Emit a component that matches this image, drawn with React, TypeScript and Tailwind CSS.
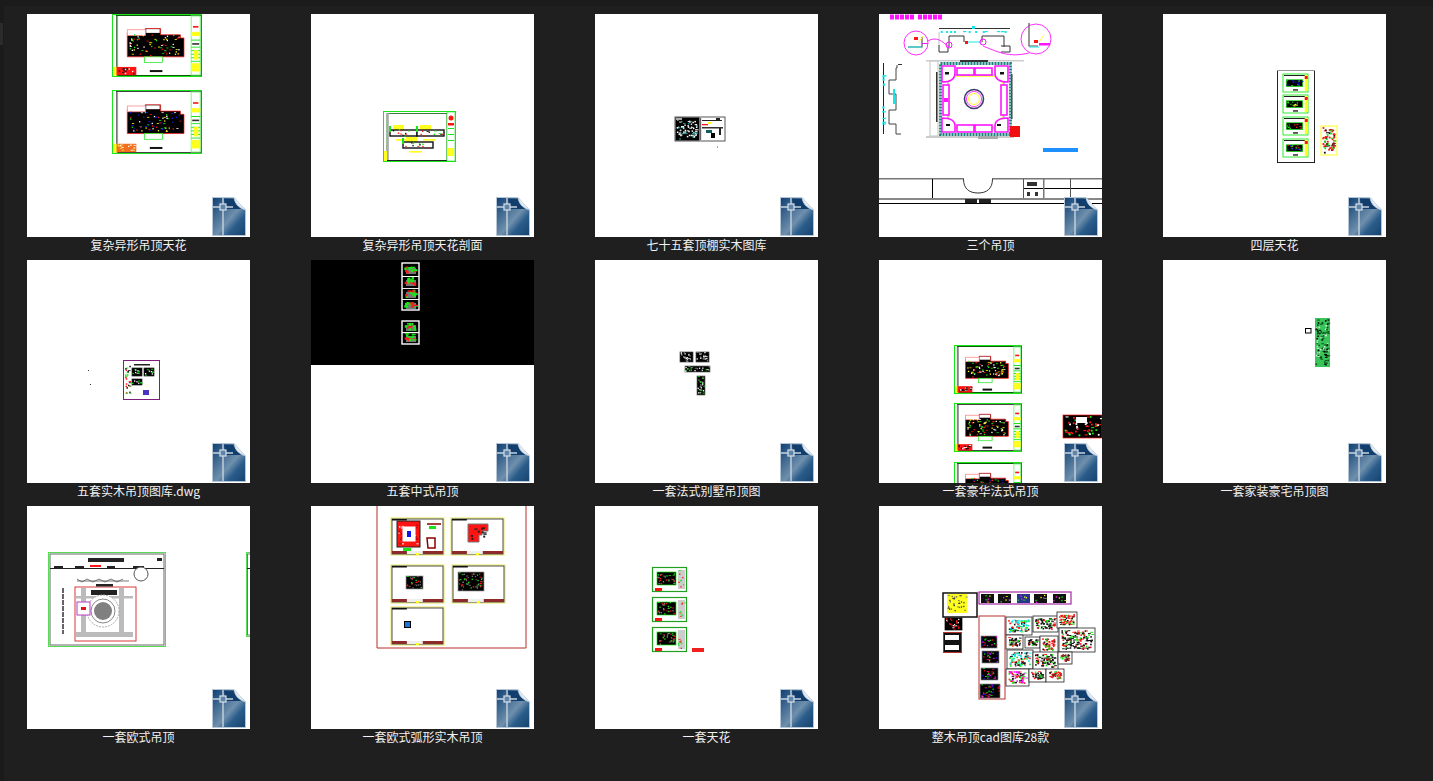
import type { ReactNode } from 'react';

const GREEN = '#19e619';
const RED = '#ff1414';
const YEL = '#ffff1e';
const MAG = '#ff14ff';
const CYAN = '#14e6e6';
const BLUE = '#1414e6';

// small deterministic scatter, reads like a shrunken CAD drawing
const Speckle = ({ x, y, w, h, n, colors, seed = 7, s = 2 }: { x: number; y: number; w: number; h: number; n: number; colors: string[]; seed?: number; s?: number }) => {
  let v = seed * 9301 + 49297;
  const next = () => {
    v = (v * 9301 + 49297) % 233280;
    return v / 233280;
  };
  const items = [];
  for (let i = 0; i < n; i++) {
    const px = x + next() * (w - s);
    const py = y + next() * (h - s);
    const wide = next() > 0.65;
    items.push(<rect key={i} x={px.toFixed(1)} y={py.toFixed(1)} width={wide ? s * 1.7 : s} height={wide ? s * 0.6 : s} fill={colors[i % colors.length]} />);
  }
  return <g>{items}</g>;
};

const Blob = ({ x, y, w, h, colors, seed, n = 24, edge = GREEN, fill = '#000' }: { x: number; y: number; w: number; h: number; colors: string[]; seed: number; n?: number; edge?: string; fill?: string }) => (
  <g>
    <rect x={x} y={y} width={w} height={h} fill={fill} stroke={edge} strokeWidth="0.7" />
    <Speckle x={x} y={y} w={w} h={h} n={Math.max(n, Math.round((w * h) / 9))} colors={colors} seed={seed} s={1.3} />
  </g>
);

const TitleCol = ({ x, y, w, h }: { x: number; y: number; w: number; h: number }) => (
  <g>
    <rect x={x} y={y} width={w} height={h} fill="#fff" stroke="#7dfb7d" strokeWidth="1" />
    <rect x={x + w * 0.2} y={y + h * 0.17} width={w * 0.6} height="1.6" fill={RED} />
    <rect x={x} y={y + h * 0.27} width={w} height={h * 0.07} fill={YEL} />
    <rect x={x} y={y + h * 0.4} width={w} height="1" fill={GREEN} />
    <rect x={x + 1} y={y + h * 0.46} width={w - 2} height="1.6" fill="#333" />
    {[0.52, 0.58, 0.64, 0.7, 0.76].map((f) => (
      <rect key={f} x={x} y={y + h * f} width={w} height="0.9" fill={GREEN} />
    ))}
    <rect x={x + w * 0.3} y={y + h * 0.58} width={w * 0.5} height={h * 0.16} fill={YEL} />
    <rect x={x} y={y + h * 0.8} width={w} height={h * 0.14} fill={YEL} />
  </g>
);

const Villa = ({ x, y, w, h, frameGray = false, stamp = RED, plan = [RED, YEL, GREEN, '#fff'], seed = 3 }: { x: number; y: number; w: number; h: number; frameGray?: boolean; stamp?: string; plan?: string[]; seed?: number }) => (
  <g>
    <rect x={x + 0.5} y={y + 0.5} width={w - 1} height={h - 1} fill="#fff" stroke={GREEN} strokeWidth="1" />
    <rect x={x + w * 0.05} y={y + 1.5} width={w * 0.94} height={h - 3} fill="#fff" stroke={frameGray ? '#444' : '#0a5c0a'} strokeWidth="1" />
    <rect x={x + w * 0.05} y={y + 2} width="1.6" height={h - 4} fill="#a0a0a0" />
    <TitleCol x={x + w * 0.88} y={y + 2} w={w * 0.1} h={h - 4} />
    <path d={`M${x + w * 0.17} ${y + h * 0.3}h${w * 0.2}v-${h * 0.07}h${w * 0.17}v${h * 0.1}h${w * 0.22}v${h * 0.05}h${w * 0.04}v${h * 0.3}h-${w * 0.63}z`} fill="#000" stroke={RED} strokeWidth="0.7" />
    <rect x={x + w * 0.17} y={y + h * 0.25} width={w * 0.2} height={h * 0.09} fill="#fff" stroke="#ff8a8a" strokeWidth="0.8" />
    <rect x={x + w * 0.36} y={y + h * 0.68} width={w * 0.2} height={h * 0.09} fill="#fff" stroke={GREEN} strokeWidth="0.7" />
    <rect x={x + w * 0.38} y={y + h * 0.24} width={w * 0.15} height={h * 0.06} fill="#fff" />
    <Speckle x={x + w * 0.18} y={y + h * 0.32} w={w * 0.6} h={h * 0.35} n={70} colors={plan} seed={seed} s={1.3} />
    <rect x={x + w * 0.42} y={y + h * 0.89} width={w * 0.14} height="2" fill="#111" />
    <rect x={x + 1} y={y + h * 0.84} width={w * 0.05} height={h * 0.14} fill={YEL} />
    <rect x={x + w * 0.05} y={y + h * 0.84} width={w * 0.22} height={h * 0.13} fill={stamp} />
    <Speckle x={x + w * 0.06} y={y + h * 0.85} w={w * 0.2} h={h * 0.11} n={14} colors={stamp === RED ? ['#111', '#111', '#fff'] : ['#fff', '#ffd24a']} seed={seed + 4} s={1.4} />
  </g>
);

const MiniSheet = ({ x, y, w, h, plan, seed }: { x: number; y: number; w: number; h: number; plan: string[]; seed: number }) => (
  <g>
    <rect x={x} y={y} width={w} height={h} fill="#fff" stroke={GREEN} strokeWidth="0.9" />
    <rect x={x + 1} y={y + 1} width={w - 2} height="1" fill="#222" />
    <rect x={x + w * 0.87} y={y + 1} width={w * 0.12} height={h - 2} fill={YEL} />
    <rect x={x + w * 0.87} y={y + 2} width={w * 0.12} height="3" fill={RED} />
    <Blob x={x + w * 0.13} y={y + h * 0.32} w={w * 0.66} h={h * 0.38} colors={plan} seed={seed} n={16} />
    <rect x={x + w * 0.4} y={y + h * 0.85} width={w * 0.2} height="1.3" fill="#111" />
  </g>
);

const RedSheet = ({ x, y, w, h, blobX, blobY, blobW, blobH, seed, dark = true }: { x: number; y: number; w: number; h: number; blobX: number; blobY: number; blobW: number; blobH: number; seed: number; dark?: boolean }) => (
  <g>
    <rect x={x} y={y} width={w} height={h} fill="#fff" stroke="#e8e85a" strokeWidth="1" />
    <rect x={x + 1} y={y + 1} width={w - 2} height={h - 2} fill="none" stroke="#222" strokeWidth="0.8" />
    <rect x={x + 1} y={y + 1} width={w * 0.28} height="1.5" fill="#111" />
    <rect x={x + 1} y={y + h - 4} width={w - 2} height="3" fill="#8c2a2a" />
    <rect x={x + w * 0.3} y={y + h - 4} width={w * 0.3} height="3" fill="#eee" />
    <rect x={x + w * 0.47} y={y + h - 2} width="3" height="2" fill={YEL} />
    {dark && <Blob x={blobX} y={blobY} w={blobW} h={blobH} colors={[RED, GREEN, '#777', '#666']} seed={seed} n={20} edge="#999" />}
  </g>
);

const Drawing1 = () => (
  <>
    <Villa x={85} y={0} w={90} h={63} seed={3} />
    <Villa x={85} y={76} w={90} h={64} frameGray stamp="#f0701e" plan={[BLUE, RED, YEL, GREEN, BLUE, '#fff']} seed={11} />
  </>
);

const Drawing2 = () => (
  <g>
    <rect x="72.5" y="97.5" width="72" height="50" fill="#fff" stroke={GREEN} strokeWidth="1" />
    <rect x="76" y="99.500" width="60" height="47" fill="#fff" stroke="#0a5c0a" strokeWidth="0.8" />
    <rect x="76" y="99" width="1.8" height="47" fill="#aaa" />
    <rect x="76" y="146" width="60" height="1" fill="#222" />
    <rect x="73" y="137" width="3" height="10" fill={YEL} />
    <rect x="136" y="98" width="8" height="49" fill="#fff" stroke={GREEN} strokeWidth="0.6" />
    <circle cx="140" cy="104" r="2.5" fill={RED} />
    <rect x="137" y="109" width="6" height="2.5" fill={RED} />
    <rect x="137" y="114" width="6" height="1" fill={GREEN} />
    <rect x="137" y="120" width="6" height="1" fill={GREEN} />
    <rect x="137" y="126" width="6" height="1" fill={GREEN} />
    <rect x="137" y="134" width="6" height="8" fill={YEL} />
    {[[80, 119], [107, 119], [93, 131]].map(([x, y], i) => (
      <g key={i}>
        <rect x={x + 2} y={y - 8} width="11" height="5" fill={YEL} />
        <rect x={x - 1} y={y - 3} width={i === 2 ? 30 : 27} height="6" fill="#fff" stroke="#111" strokeWidth="1.400" />
        <rect x={x - 2} y={y - 7} width="2" height="6" fill={GREEN} />
        <Speckle x={x} y={y - 4} w={26} h={8} n={10} colors={[RED, GREEN, '#111']} seed={i + 2} s={1.4} />
        <rect x={x + 5} y={y + 6} width="13" height="1.6" fill={YEL} />
      </g>
    ))}
  </g>
);

const Drawing3 = () => (
  <g>
    <rect x="80" y="103" width="50" height="24" fill="#fff" stroke="#555" strokeWidth="1" />
    <rect x="80.5" y="103.5" width="24" height="23" fill="#000" />
    <Speckle x={81} y={105} w={23} h={21} n={70} colors={['#fff', '#fff', '#1c9c9c', '#ddd']} seed={5} s={1.5} />
    <rect x="81" y="104" width="6" height="2" fill="#aaa" />
    <rect x="105" y="104" width="1.2" height="22" fill="#666" />
    <rect x="107" y="106" width="20" height="1" fill="#222" />
    <rect x="107" y="110" width="6" height="1.3" fill={RED} />
    <rect x="113" y="108" width="3" height="2" fill={YEL} />
    <rect x="107" y="113" width="21" height="1.5" fill="#333" />
    <rect x="121" y="104" width="4" height="2" fill="#222" />
    <rect x="111" y="116" width="6" height="3" fill="#125e5e" />
    <rect x="116" y="119" width="4" height="5" fill="#000" />
    <rect x="124" y="114" width="2" height="7" fill="#222" />
    <rect x="122" y="132.5" width="1" height="1" fill="#444" />
  </g>
);

const Drawing4 = () => (
  <g>
    {[11, 16, 21, 26, 31, 39, 44, 49, 54, 59].map((x) => (
      <rect key={x} x={x} y="0.500" width="4" height="5" fill={MAG} />
    ))}
    <rect x="60" y="14" width="71" height="1" fill="#333" />
    <Speckle x={60} y={17} w={71} h={2} n={12} colors={[CYAN]} seed={3} s={2} />
    <rect x="93" y="12" width="3" height="3" fill={CYAN} />
    <path d="M60 31v7h9v-5M70 33V22h15v6M103 28v-6h22v11M122 38h9v-6h-9" fill="none" stroke="#333" strokeWidth="1" />
    <path d="M60 18v16" stroke="#888" strokeWidth="0.5" />
    <rect x="86" y="27" width="3" height="3" fill={RED} />
    <path d="M89 28h14" stroke={CYAN} strokeWidth="1" />
    <circle cx="37" cy="29" r="12" fill="#fff" stroke={MAG} strokeWidth="0.9" />
    <circle cx="157" cy="25" r="15" fill="#fff" stroke={MAG} strokeWidth="0.9" />
    <path d="M49 27c8-5 14 0 21 6M104 32c15 6 26 12 46 7" fill="none" stroke={MAG} strokeWidth="0.9" />
    <circle cx="70" cy="31" r="3" fill="none" stroke={MAG} strokeWidth="1" />
    <circle cx="104" cy="28" r="3" fill="none" stroke={MAG} strokeWidth="1" />
    <path d="M29 33h14v-10M150 9v23h9" fill="none" stroke="#555" strokeWidth="1.200" />
    <path d="M29 33h14M150 33h10" stroke={CYAN} strokeWidth="1" />
    <rect x="35" y="23" width="4" height="3" fill={RED} />
    <rect x="155" y="26" width="4" height="3" fill={RED} />
    <path d="M40 28l4-6M160 28l5-7" stroke={YEL} strokeWidth="1" />
    <rect x="160" y="29" width="11" height="2.5" fill={MAG} />
    <rect x="43" y="29" width="6" height="1" fill={MAG} />
    <rect x="4" y="49" width="1" height="71" fill="#222" />
    <path d="M18 51v3h-1v12h-7v14h7v16h-7v14h7v10h5" fill="none" stroke="#444" strokeWidth="1" />
    <rect x="19" y="50" width="4" height="1" fill="#333" />
    <Speckle x={3} y={52} w={3} h={66} n={9} colors={[CYAN]} seed={9} s={2.2} />
    <rect x="14" y="75" width="2" height="15" fill={CYAN} />
    <rect x="47" y="46" width="98" height="1.500" fill="#ccc" />
    <rect x="51" y="47" width="8" height="75" fill="none" stroke="#ccc" strokeWidth="1.200" />
    <rect x="57" y="58" width="1.5" height="50" fill="#333" />
    <rect x="47" y="122" width="88" height="2" fill="#ccc" />
    <rect x="81" y="46" width="28" height="2" fill="#333" />
    <rect x="99" y="122" width="20" height="3" fill="#aaa" />
    <rect x="132" y="60" width="1.500" height="45" fill="#333" />
    <rect x="61.5" y="49.5" width="70" height="71" fill="#fff" stroke="#1a7f7f" strokeWidth="2.8" strokeDasharray="2 1" />
    <rect x="70" y="62" width="54" height="51" rx="4" fill="none" stroke={YEL} strokeWidth="1.400" />
    <rect x="69" y="61" width="56" height="53" rx="4" fill="none" stroke="#1e90ff" strokeWidth="0.700" />
    {[[78, 54, 17, 7], [96, 54, 17, 7], [78, 111, 17, 7], [96, 111, 17, 7], [64, 71, 6, 30], [122, 71, 6, 30]].map(([x, y, w, h], i) => (
      <rect key={i} x={x} y={y} width={w} height={h} fill="#fff" stroke={MAG} strokeWidth="1.600" />
    ))}
    <rect x="65" y="84" width="4" height="4" fill={MAG} />
    <path d="M63 52h13v7c0 6-5 9-13 9zM129 52h-13v7c0 6 5 9 13 9zM63 118h13v-6c0-6-5-8-13-8zM129 118h-13v-6c0-6 5-8 13-8z" fill="#fff" stroke={MAG} strokeWidth="1.600" />
    <rect x="66" y="58" width="4" height="2.5" fill="#111" />
    <rect x="121" y="58" width="4" height="2.5" fill="#111" />
    <rect x="67" y="110" width="4" height="2" fill="#111" />
    <rect x="118" y="110" width="4" height="2" fill="#111" />
    <circle cx="95" cy="85" r="9.5" fill="#fff" stroke="#3d3d6b" strokeWidth="1.6" />
    <circle cx="95" cy="85" r="7.6" fill="#fff" stroke={MAG} strokeWidth="0.8" />
    <circle cx="95" cy="85" r="5.5" fill="#fff" stroke={YEL} strokeWidth="1" />
    <rect x="131" y="112" width="10" height="11" fill="#f01010" />
    <rect x="164" y="134" width="35" height="4" fill="#1e90ff" />
    <rect x="0" y="164" width="223" height="1.500" fill="#777" />
    <rect x="0" y="184" width="223" height="2" fill="#888" />
    <rect x="0" y="189" width="223" height="1" fill="#000" />
    <rect x="144" y="174" width="79" height="1" fill="#000" />
    <rect x="53" y="165" width="1" height="19" fill="#000" />
    <rect x="144" y="165" width="1" height="19" fill="#555" />
    <rect x="164" y="165" width="1.500" height="19" fill="#777" />
    <rect x="191" y="165" width="1" height="19" fill="#555" />
    <path d="M84.500 165c0 10 6 14 14.500 14s14.500-4 14.500-14" fill="#fff" stroke="#333" strokeWidth="1" />
    <rect x="85" y="164" width="28" height="2" fill="#fff" />
    <rect x="86" y="185" width="12" height="4" fill="#222" />
    <rect x="100" y="185" width="12" height="4" fill="#222" />
    <rect x="148" y="168" width="10" height="4" fill="#333" />
    <rect x="148" y="178" width="3" height="4" fill="#333" />
    <rect x="156" y="178" width="3" height="4" fill="#333" />
  </g>
);

const Drawing5 = () => (
  <g>
    <rect x="114.500" y="56.500" width="37" height="92" fill="#fff" stroke="#222" strokeWidth="1" />
    <rect x="114" y="56" width="38" height="1" fill="#999" />
    <MiniSheet x={120} y={60} w={25} h={18} plan={[BLUE, BLUE, GREEN]} seed={1} />
    <MiniSheet x={120} y={81} w={25} h={18} plan={[GREEN, '#000', YEL]} seed={2} />
    <MiniSheet x={120} y={103} w={25} h={18} plan={[GREEN, RED, '#000']} seed={3} />
    <MiniSheet x={120} y={125} w={25} h={18} plan={[BLUE, RED, GREEN]} seed={4} />
    <rect x="158" y="112" width="16" height="29" fill="#fff" stroke={YEL} strokeWidth="1" />
    <Speckle x={159} y={113} w={14} h={27} n={60} colors={[RED, RED, '#111', GREEN]} seed={5} s={1.800} />
  </g>
);

const Drawing6 = () => (
  <g>
    <rect x="96.500" y="100.500" width="36" height="39" fill="#fff" stroke="#7b1f7b" strokeWidth="1" />
    <Speckle x={98} y={102} w={6} h={34} n={24} colors={[RED, '#111', GREEN]} seed={3} s={1.5} />
    <rect x="107" y="104" width="16" height="1.5" fill="#222" />
    <Blob x={105} y={108} w={10} h={8} colors={[GREEN, '#fff']} seed={4} n={6} edge="#222" />
    <Blob x={117} y={108} w={10} h={8} colors={[GREEN, '#fff']} seed={5} n={6} edge="#222" />
    <Blob x={105} y={119} w={10} h={6} colors={[GREEN, '#fff']} seed={6} n={5} edge="#222" />
    <rect x="116" y="130" width="6" height="5" fill="#4a35c0" />
    <rect x="61" y="110" width="1" height="1" fill="#333" />
    <rect x="63" y="124" width="1" height="1" fill="#333" />
  </g>
);

const Drawing7 = () => (
  <g>
    <rect x="0" y="0" width="223" height="105" fill="#000" />
    <rect x="91" y="3" width="17" height="47" fill="#000" stroke="#fff" strokeWidth="1.4" />
    <rect x="91" y="61" width="17" height="23" fill="#000" stroke="#fff" strokeWidth="1.4" />
    <rect x="91" y="16" width="17" height="1" fill="#fff" />
    <rect x="91" y="28" width="17" height="1" fill="#eee" />
    <rect x="91" y="39" width="17" height="1" fill="#fff" />
    <rect x="91" y="72" width="17" height="1.2" fill="#fff" />
    {[[93, 5], [93, 17], [93, 29], [93, 40], [93, 62], [93, 73]].map(([x, y], i) => (
      <g key={i}>
        <rect x={x + 2} y={y + 3} width="10" height="6" fill="#777" />
        <Speckle x={x} y={y} w={13} h={9} n={12} colors={[RED, GREEN, GREEN]} seed={i + 3} s={2.4} />
      </g>
    ))}
  </g>
);

const Drawing8 = () => (
  <g>
    <Blob x={85} y={92} w={13} h={10} colors={['#fff', '#888']} seed={2} n={20} edge="#444" />
    <Blob x={101} y={92} w={13} h={10} colors={['#fff', '#888']} seed={4} n={20} edge="#444" />
    <Blob x={90} y={106} w={25} h={6} colors={['#fff', '#888', GREEN]} seed={6} n={20} edge="#666" />
    <Blob x={102} y={116} w={8} h={19} colors={['#fff', '#888', GREEN]} seed={8} n={24} edge="#666" />
  </g>
);

const Drawing9 = () => (
  <g>
    <Villa x={75} y={85} w={68} h={49} plan={[YEL, GREEN, RED, '#fff']} seed={5} />
    <Villa x={75} y={143} w={68} h={49} frameGray plan={[GREEN, RED, YEL, '#fff']} seed={7} />
    <Villa x={75} y={202} w={68} h={49} plan={[BLUE, RED, GREEN]} seed={8} />
    <rect x="184" y="155" width="39" height="23" fill="#000" stroke={RED} strokeWidth="0.7" />
    <Speckle x={185} y={156} w={38} h={21} n={50} colors={[RED, '#fff', GREEN, RED]} seed={4} s={1.800} />
    <rect x="197" y="157" width="11" height="6" fill="#fff" />
  </g>
);

const Drawing10 = () => (
  <g>
    <rect x="142.500" y="68.500" width="5.500" height="4.500" fill="#fff" stroke="#000" strokeWidth="1" />
    <rect x="152" y="58" width="15" height="49" fill="#39c45a" />
    <Speckle x={152.500} y={59} w={14} h={47} n={90} colors={['#0b4f1c', '#000', '#baf5c6', '#0b4f1c']} seed={6} s={1.600} />
  </g>
);

const Drawing11 = () => (
  <g>
    <rect x="21.500" y="46.500" width="117" height="94" fill="#fff" stroke="#57dc57" strokeWidth="1" />
    <rect x="23" y="48" width="114" height="91" fill="#fff" stroke="#666" strokeWidth="1" />
    <rect x="61" y="52" width="36" height="4" fill="#222" />
    <rect x="130" y="52" width="5" height="3" fill="#222" />
    <rect x="23" y="62" width="114" height="1" fill="#222" />
    <rect x="27" y="60" width="9" height="2" fill="#222" />
    <rect x="48" y="60" width="9" height="2" fill="#222" />
    <rect x="63" y="59" width="11" height="2" fill={RED} />
    <rect x="80" y="60" width="8" height="2" fill="#222" />
    <rect x="106" y="60" width="11" height="2" fill="#222" />
    <path d="M50 75h52M50 73l5 3 5-3 6 3 6-3 6 3 6-3 6 3 6-3" fill="none" stroke="#555" strokeWidth="0.800" />
    <circle cx="114" cy="68" r="7" fill="#fff" stroke="#555" strokeWidth="1" />
    <rect x="48" y="81" width="61" height="54" fill="#fff" stroke="#d63a3a" strokeWidth="1" />
    <rect x="49" y="90" width="57" height="2.500" fill="#bbb" />
    <rect x="49" y="126" width="57" height="5" fill="#bbb" />
    <rect x="54" y="82" width="5" height="48" fill="#bbb" />
    <rect x="92" y="82" width="5" height="48" fill="#bbb" />
    <rect x="64" y="84" width="26" height="5" fill="#222" />
    <rect x="69" y="78" width="17" height="2.500" fill="#222" />
    <circle cx="76" cy="105" r="16" fill="#fff" stroke="#aaa" strokeWidth="1" strokeDasharray="2 1" />
    <circle cx="76" cy="105" r="12" fill="#fff" stroke="#888" strokeWidth="1" />
    <circle cx="76" cy="105" r="9" fill="#808080" />
    <rect x="50" y="96" width="13" height="13" fill="#fff" stroke="#b83cc0" strokeWidth="1" />
    <rect x="54" y="101" width="5" height="3" fill="#e0141e" />
    <path d="M36 82v46" stroke="#333" strokeWidth="1.500" strokeDasharray="5 1" />
    <rect x="219.500" y="46.500" width="8" height="84" fill="#fff" stroke="#57dc57" strokeWidth="1" />
    <rect x="220.500" y="48" width="8" height="81" fill="none" stroke="#555" strokeWidth="0.800" />
    <rect x="220" y="62" width="3" height="1" fill="#222" />
  </g>
);

const Drawing12 = () => (
  <g>
    <path d="M66 -2V142H215V-2" fill="#fff" stroke="#b92d2d" strokeWidth="1" />
    <RedSheet x={80} y={12} w={53} h={37} blobX={86} blobY={15} blobW={22} blobH={25} seed={2} dark={false} />
    <rect x="86" y="15" width="23" height="26" fill={RED} stroke="#222" strokeWidth="1" />
    <Speckle x={87} y={16} w={21} h={24} n={26} colors={['#fff', '#8a0c0c']} seed={3} s={1.400} />
    <rect x="92" y="21" width="12" height="14" fill="#fff" stroke="#fff" />
    <rect x="96" y="25" width="4" height="6" fill={BLUE} />
    <path d="M116 18h14M116 32h8v10h-7z" fill="none" stroke="#8b0000" strokeWidth="1.500" />
    <rect x="118" y="20" width="7" height="3" fill={GREEN} />
    <rect x="92" y="42" width="8" height="3" fill={GREEN} />
    <RedSheet x={140} y={12} w={53} h={37} blobX={157} blobY={18} blobW={0} blobH={0} seed={3} dark={false} />
    <path d="M157 18h20v7h-6v4h-3v7h-11z" fill={RED} stroke="#777" strokeWidth="1" />
    <Speckle x={158} y={20} w={18} h={14} n={10} colors={['#222']} seed={5} />
    <RedSheet x={80} y={59} w={53} h={38} blobX={95} blobY={70} blobW={17} blobH={13} seed={4} />
    <RedSheet x={141} y={59} w={53} h={38} blobX={147} blobY={66} blobW={26} blobH={19} seed={5} />
    <RedSheet x={80} y={101} w={53} h={38} blobX={0} blobY={0} blobW={0} blobH={0} seed={6} dark={false} />
    <rect x="93.500" y="115.500" width="6" height="6" fill="#1e73d8" stroke="#000" strokeWidth="1" />
  </g>
);

const Drawing13 = () => (
  <g>
    {[61, 91, 121].map((y, i) => (
      <g key={y}>
        <rect x="57.500" y={y + 0.5} width="34" height="24" fill="#fff" stroke="#1fa01f" strokeWidth="1.200" />
        <Blob x={62} y={y + 5} w={19} h={13} colors={[RED, GREEN, '#888']} seed={i + 3} n={24} />
        <rect x="83" y={y + 3} width="7" height="19" fill="#ccc" />
        <Speckle x={83} y={y + 3} w={7} h={19} n={8} colors={[RED, GREEN]} seed={i + 8} s={1.300} />
        <rect x="60" y={y + 21} width="7" height="3" fill={RED} />
      </g>
    ))}
    <rect x="97" y="142" width="12" height="4" fill="#f02020" />
  </g>
);

const Drawing14 = () => (
  <g>
    <rect x="64" y="87" width="34" height="24" fill="#fff" stroke="#111" strokeWidth="1.500" />
    <rect x="68" y="88" width="20" height="19" fill={YEL} />
    <Speckle x={68} y={89} w={20} h={17} n={30} colors={['#333', '#666']} seed={4} s={1.300} />
    <rect x="100" y="86" width="92" height="12" fill="#fff" stroke="#a22aa2" strokeWidth="1.200" />
    {[102, 119, 138, 155, 174].map((x, i) => (
      <g key={x}>
        <rect x={x} y="88" width="13" height="9" fill={i === 2 ? '#27358c' : '#111'} />
        <Speckle x={x} y={88} w={13} h={9} n={6} colors={[GREEN, YEL, MAG]} seed={i + 2} s={1.300} />
      </g>
    ))}
    <Blob x={66} y={112} w={17} h={12} colors={[RED, RED, '#fff']} seed={2} n={22} edge="#000" />
    <rect x="64.500" y="126.500" width="18" height="20" fill="#111" stroke="#b93030" strokeWidth="1" />
    <rect x="66" y="129" width="14" height="5" fill="#fff" />
    <rect x="66" y="139" width="14" height="5" fill="#fff" />
    <rect x="100" y="110" width="26" height="83" fill="#fff" stroke="#b93030" strokeWidth="1" />
    {[[102, 130, 16, 12], [103, 145, 17, 12], [102, 162, 17, 12], [101, 178, 20, 14]].map(([x, y, w, h], i) => (
      <Blob key={i} x={x} y={y} w={w} h={h} colors={[RED, GREEN, BLUE, MAG]} seed={i + 6} n={18} edge="#888" />
    ))}
    {[[127, 111, 26, 18, '#fff', CYAN], [154, 110, 25, 16, '#fff', '#111'], [178, 106, 20, 16, '#fff', RED], [180, 122, 36, 24, '#fff', '#111'], [127, 129, 17, 14, '#fff', '#111'], [146, 131, 15, 11, '#fff', '#111'], [161, 130, 18, 17, '#fff', RED], [128, 144, 26, 19, '#fff', CYAN], [154, 146, 25, 18, '#fff', '#111'], [179, 146, 14, 12, '#fff', '#8b2a2a'], [127, 163, 23, 17, '#fff', MAG], [150, 163, 17, 13, '#fff', '#111'], [167, 163, 18, 13, '#fff', RED]].map(([x, y, w, h, bg, c], i) => (
      <g key={i}>
        <rect x={x as number} y={y as number} width={w as number} height={h as number} fill={bg as string} stroke="#222" strokeWidth="0.800" />
        <Speckle x={(x as number) + 2} y={(y as number) + 2} w={(w as number) - 4} h={(h as number) - 4} n={Math.round((Number(w) * Number(h)) / 6)} colors={[c as string, '#111', c as string, RED, GREEN]} seed={i + 12} s={1.600} />
      </g>
    ))}
  </g>
);

const CadIcon = ({ id }: { id: number }) => (
  <svg className="absolute right-[4px] bottom-[1px] blur-[0.4px]" width="34" height="39" viewBox="0 0 34 39">
    <defs>
      <linearGradient id={`sheen${id}`} x1="0" y1="0" x2="1" y2="1">
        <stop offset="0" stopColor="#0f3f73" />
        <stop offset="0.55" stopColor="#6f90ad" />
        <stop offset="0.72" stopColor="#2a5c8a" />
        <stop offset="1" stopColor="#16426f" />
      </linearGradient>
    </defs>
    <path d="M0.500 0.500H22L33.500 13V38.500H0.500Z" fill={`url(#sheen${id})`} stroke="#b6c6d6" strokeWidth="1" />
    <path d="M12 2h10c3 2 6 7 7 10H14z" fill="#123e6e" />
    <path d="M11 1v37M1 10h20" stroke="#c7d3df" strokeWidth="1.400" />
    <rect x="8" y="7" width="6" height="6" fill="#5f86aa" stroke="#d5dee7" strokeWidth="1.200" />
    <path d="M22 .5C23 6 25 10 33.500 13" fill="#e4ebf2" stroke="#c7d3df" strokeWidth="0.800" />
  </svg>
);

const files: { name: string; art: ReactNode }[] = [
  { name: '复杂异形吊顶天花', art: <Drawing1 /> },
  { name: '复杂异形吊顶天花剖面', art: <Drawing2 /> },
  { name: '七十五套顶棚实木图库', art: <Drawing3 /> },
  { name: '三个吊顶', art: <Drawing4 /> },
  { name: '四层天花', art: <Drawing5 /> },
  { name: '五套实木吊顶图库.dwg', art: <Drawing6 /> },
  { name: '五套中式吊顶', art: <Drawing7 /> },
  { name: '一套法式别墅吊顶图', art: <Drawing8 /> },
  { name: '一套豪华法式吊顶', art: <Drawing9 /> },
  { name: '一套家装豪宅吊顶图', art: <Drawing10 /> },
  { name: '一套欧式吊顶', art: <Drawing11 /> },
  { name: '一套欧式弧形实木吊顶', art: <Drawing12 /> },
  { name: '一套天花', art: <Drawing13 /> },
  { name: '整木吊顶cad图库28款', art: <Drawing14 /> },
];

export default function App() {
  return (
    <div className="flex h-[781px] w-[1433px] flex-col overflow-hidden bg-[#1f1f1f] font-['Noto_Sans_CJK_SC','Microsoft_YaHei',sans-serif]">
      <div className="h-[6px] shrink-0 bg-[#1b1b1b]" />
      <div className="flex flex-1">
        <div className="flex w-[4px] shrink-0 flex-col bg-[#1b1b1b] pt-[17px]">
          <div className="h-[22px] w-[3px] bg-[#2b2b2b]" />
        </div>
        {/* Thumbnail grid */}
        <div className="grid grid-cols-[repeat(5,223px)] content-start gap-x-[61px] pt-[8px] pl-[23px]">
          {files.map((file, i) => (
            <div key={file.name} className="flex h-[246px] w-[223px] flex-col">
              <div className="relative h-[223px] w-[223px] overflow-hidden bg-white">
                <svg className="blur-[0.35px]" width="223" height="223" viewBox="0 0 223 223">
                  {file.art}
                </svg>
                <CadIcon id={i} />
              </div>
              <p className="h-[23px] text-center text-[12px] leading-[15px] whitespace-nowrap text-[#f2f2f2]">{file.name}</p>
            </div>
          ))}
        </div>
      </div>
    </div>
  );
}
